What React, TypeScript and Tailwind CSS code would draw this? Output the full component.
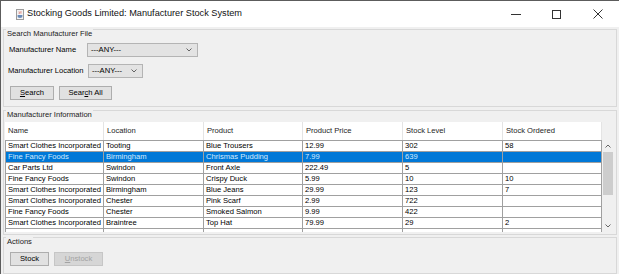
import type { ReactNode } from 'react';

const rows: string[][] = [
  ['Smart Clothes Incorporated', 'Tooting', 'Blue Trousers', '12.99', '302', '58'],
  ['Fine Fancy Foods', 'Birmingham', 'Chrismas Pudding', '7.99', '639', ''],
  ['Car Parts Ltd', 'Swindon', 'Front Axle', '222.49', '5', ''],
  ['Fine Fancy Foods', 'Swindon', 'Crispy Duck', '5.99', '10', '10'],
  ['Smart Clothes Incorporated', 'Birmingham', 'Blue Jeans', '29.99', '123', '7'],
  ['Smart Clothes Incorporated', 'Chester', 'Pink Scarf', '2.99', '722', ''],
  ['Fine Fancy Foods', 'Chester', 'Smoked Salmon', '9.99', '422', ''],
  ['Smart Clothes Incorporated', 'Braintree', 'Top Hat', '79.99', '29', '2'],
  ['', '', '', '', '', ''],
];

const columns = [
  { name: 'Name', w: 'w-[99px]' },
  { name: 'Location', w: 'w-[100px]' },
  { name: 'Product', w: 'w-[99px]' },
  { name: 'Product Price', w: 'w-[100px]' },
  { name: 'Stock Level', w: 'w-[100px]' },
  { name: 'Stock Ordered', w: 'w-[99px]' },
];

function Chevron({ up = false }: { up?: boolean }) {
  return (
    <svg width="6" height="4" viewBox="0 0 6 4" className="block">
      <path d={up ? 'M0.5 3.5 L3 1 L5.5 3.5' : 'M0.5 0.5 L3 3 L5.5 0.5'} fill="none" stroke="#555" strokeWidth="0.9" />
    </svg>
  );
}

function Combo({ width }: { width: string }) {
  return (
    <div className={`${width} h-[14px] flex items-center justify-between bg-[#e3e3e3] border border-[#b4b4b4] pl-[3px] pr-[5px]`}>
      <span>---ANY---</span>
      <Chevron />
    </div>
  );
}

function Button({ children, width, disabled = false }: { children: ReactNode; width: string; disabled?: boolean }) {
  return (
    <div
      className={`${width} h-[14px] flex items-center justify-center border ${
        disabled ? 'bg-[#d6d6d6] border-[#c6c6c6] text-[#a3a3a3]' : 'bg-[#e1e1e1] border-[#adadad] text-black'
      }`}
    >
      {children}
    </div>
  );
}

function PanelTitle({ children }: { children: ReactNode }) {
  return (
    <div className="h-[9px] leading-[9px] -mt-[1px] pl-[2px]">
      <span className="inline-block bg-[#f0f0f0] px-[1px] text-[#222]">{children}</span>
    </div>
  );
}

export default function App() {
  return (
    <div className="w-[619px] h-[274px] overflow-hidden bg-[#f0f0f0] border-l border-t border-[#5c5c5c] font-['Liberation_Sans',Arial,sans-serif] text-[7.6px] text-black">
      {/* title bar */}
      <div className="h-[26px] bg-white flex items-center">
        <svg width="8" height="11" viewBox="0 0 8 11" className="ml-[15px]">
          <rect x="0.5" y="0.5" width="7" height="10" fill="#f4f4f4" stroke="#9c9c9c" />
          <path d="M3 2.5 C4 3.5 2.5 4 3.5 5 M4.8 2.2 C5.6 3.2 4.2 3.7 5 4.6" stroke="#d24a3c" strokeWidth="0.7" fill="none" />
          <path d="M1.6 6 H6.4 V7.6 C6.4 8.6 5.4 9 4 9 C2.6 9 1.6 8.6 1.6 7.6 Z" fill="#6a8bb8" />
        </svg>
        <span className="ml-[3px] text-[9.2px] text-[#111]">
          Stocking Goods Limited: Manufacturer Stock System
        </span>
        <div className="ml-auto flex h-full mr-[1px]">
          <div className="w-[41px] h-full flex items-center justify-center">
            <div className="w-[10px] h-px bg-[#333]" />
          </div>
          <div className="w-[41px] h-full flex items-center justify-center">
            <div className="w-[9px] h-[9px] border border-[#333]" />
          </div>
          <div className="w-[41px] h-full flex items-center justify-center">
            <svg width="10" height="10" viewBox="0 0 10 10">
              <path d="M0.5 0.5 L9.5 9.5 M9.5 0.5 L0.5 9.5" stroke="#333" strokeWidth="1" />
            </svg>
          </div>
        </div>
      </div>

      <div className="px-[2px]">
        {/* search panel */}
        <div className="mt-[2px] border border-[#d8d8d8] pb-[6px]">
          <PanelTitle>Search Manufacturer File</PanelTitle>
          <div className="mt-[5px] pl-[5px] flex items-center">
            <span className="w-[78px]">Manufacturer Name</span>
            <Combo width="w-[111px]" />
          </div>
          <div className="mt-[7px] pl-[4px] flex items-center">
            <span className="w-[80px]">Manufacturer Location</span>
            <Combo width="w-[55px]" />
          </div>
          <div className="mt-[8px] pl-[6px] flex gap-[5px]">
            <Button width="w-[44px]">
              <span className="underline">S</span>earch
            </Button>
            <Button width="w-[53px]">
              Sear<span className="underline">c</span>h All
            </Button>
          </div>
        </div>

        {/* information panel */}
        <div className="mt-[3px] border border-[#d8d8d8] pb-[2px]">
          <PanelTitle>Manufacturer Information</PanelTitle>
          <div className="mt-[3px] ml-px flex">
            <div className="w-[597px]">
              <div className="h-[18px] flex bg-white">
                {columns.map((c) => (
                  <div key={c.name} className={`${c.w} h-full flex items-center pl-[3px] border-r border-[#e4e4e4] text-[#1e1e1e]`}>
                    {c.name}
                  </div>
                ))}
              </div>
              <div className="h-[92px] overflow-hidden border-t border-[#a0a0a0]">
                {rows.map((r, i) => {
                  const selected = i === 1;
                  return (
                    <div key={i} className={`h-[11px] flex border-b border-[#a0a0a0] ${selected ? 'bg-[#0078d7] text-[#d3ebff]' : 'bg-white'}`}>
                      {r.map((cell, j) => (
                        <div
                          key={j}
                          className={`${columns[j].w} h-full leading-[10px] pl-[2px] border-r border-[#a0a0a0] whitespace-nowrap overflow-hidden ${
                            j === 0 ? 'border-l' : ''
                          }`}
                        >
                          {cell}
                        </div>
                      ))}
                    </div>
                  );
                })}
              </div>
            </div>
            {/* scrollbar */}
            <div className="w-[12px] flex flex-col">
              <div className="h-[18px]" />
              <div className="h-[92px] flex flex-col items-center bg-[#f0f0f0]">
                <div className="h-[12px] flex items-center justify-center">
                  <Chevron up />
                </div>
                <div className="w-[10px] h-[43px] bg-[#cdcdcd]" />
                <div className="flex-1" />
                <div className="h-[12px] flex items-center justify-center">
                  <Chevron />
                </div>
              </div>
            </div>
          </div>
        </div>

        {/* actions panel */}
        <div className="mt-[2px] border border-[#d8d8d8] pb-[7px]">
          <PanelTitle>Actions</PanelTitle>
          <div className="mt-[6px] pl-[6px] flex gap-[5px]">
            <Button width="w-[39px]">Stock</Button>
            <Button width="w-[49px]" disabled>
              <span className="underline">U</span>nstock
            </Button>
          </div>
        </div>
      </div>
    </div>
  );
}
